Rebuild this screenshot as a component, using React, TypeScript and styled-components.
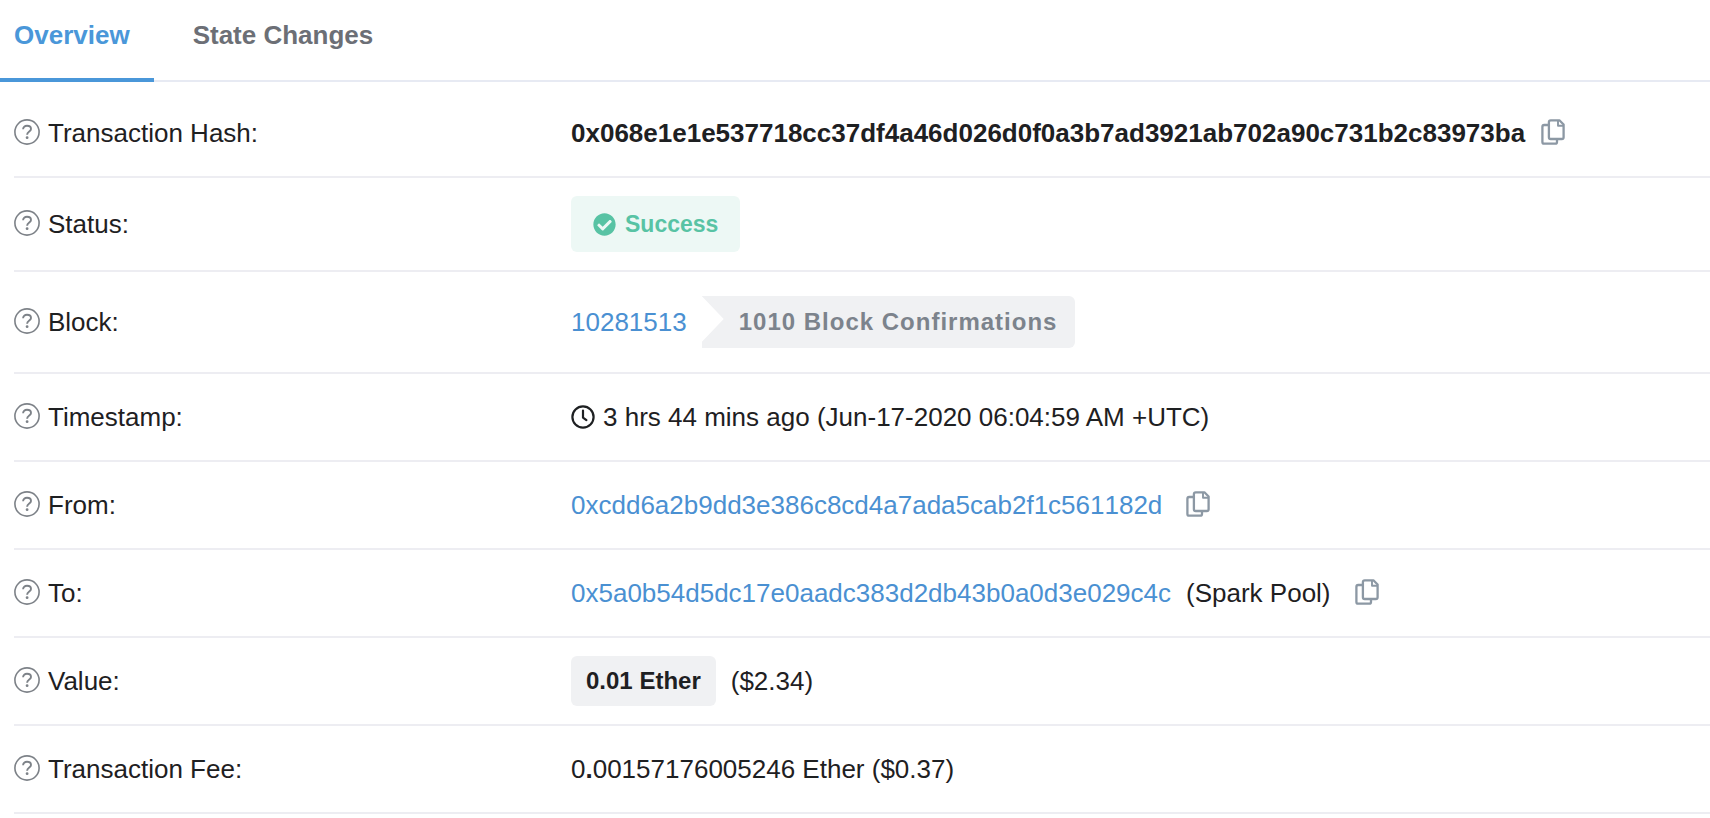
import React from "react";
import styled, { createGlobalStyle, css } from "styled-components";
import { FaCheckCircle } from "react-icons/fa";

const GlobalStyle = createGlobalStyle`
  * { box-sizing: border-box; }
  body {
    margin: 0;
    background: #fff;
    color: #1e2022;
    font-family: "Liberation Sans", Arial, sans-serif;
    font-size: 26px;
    line-height: 38px;
  }
`;

const Page = styled.main`
  min-width: 0;
`;

const Tabs = styled.nav`
  display: flex;
  gap: 25px;
  box-shadow: inset 0 -2px 0 #e7eaf3;
`;

const Tab = styled.button<{ $active?: boolean }>`
  padding: 16px 24px 24px 14px;
  border: 0;
  border-bottom: 4px solid ${(p) => (p.$active ? "#4a97d9" : "transparent")};
  background: none;
  color: ${(p) => (p.$active ? "#4a97d9" : "#6c6f76")};
  font: inherit;
  font-weight: 700;
  cursor: pointer;
`;

const Details = styled.dl`
  margin: 0;
  padding: 8px 0 0 14px;
`;

const Row = styled.div`
  display: grid;
  grid-template-columns: 557px 1fr;
  align-items: center;
  padding: 18px 0;
  border-bottom: 2px solid #ededf2;
`;

const Label = styled.dt`
  display: flex;
  align-items: center;
  gap: 8px;

  svg {
    margin-bottom: 2px;
  }
`;

const Value = styled.dd`
  display: flex;
  align-items: center;
  min-height: 50px;
  margin: 0;
  white-space: nowrap;
`;

const Hash = styled.strong`
  font-weight: 700;
`;

const Link = styled.a`
  color: #4a90d2;
  font-kerning: none;
  text-decoration: none;
`;

const Note = styled.span`
  margin-left: 15px;
`;

const CopyButton = styled.button<{ $near?: boolean }>`
  display: flex;
  margin: 0 0 0 ${(p) => (p.$near ? 16 : 24)}px;
  padding: 0 0 2px;
  border: 0;
  background: none;
  color: #8c98a4;
  cursor: pointer;
`;

const badge = css`
  display: inline-flex;
  align-items: center;
  border-radius: 6px;
  font-weight: 700;
`;

const StatusBadge = styled.span`
  ${badge}
  gap: 9px;
  height: 56px;
  padding: 0 22px;
  background: #edf8f5;
  color: #58c3a4;
  font-size: 23px;
`;

const AmountBadge = styled.span`
  ${badge}
  height: 50px;
  padding: 0 15px;
  background: #f0f1f3;
  font-size: 24px;
`;

const ConfirmationsBadge = styled.span`
  ${badge}
  height: 52px;
  margin: 6px 0 6px 15px;
  padding: 0 18px 0 37px;
  border-radius: 0 6px 6px 0;
  background: #f0f1f3;
  color: #7c838c;
  font-size: 24px;
  letter-spacing: 1px;
  clip-path: polygon(0 0, 100% 0, 100% 100%, 0 100%, 0 46px, 22px 23px);
`;

const Time = styled.time`
  display: flex;
  align-items: center;
  gap: 8px;
`;

const HelpIcon = () => (
  <svg width="26" height="26" viewBox="0 0 26 26" fill="none" stroke="#7d8288" aria-hidden="true">
    <circle cx="13" cy="13" r="12.1" strokeWidth="1.6" />
    <path d="M9.1 10.2C9.1 7.9 10.8 6.8 13 6.8C15.3 6.8 17 8 17 10C17 12.5 13.1 12.5 13.1 15.7" strokeWidth="1.9" />
    <circle cx="13.1" cy="18.7" r="1.4" fill="#7d8288" stroke="none" />
  </svg>
);

const ClockIcon = () => (
  <svg width="24" height="24" viewBox="0 0 24 24" fill="none" stroke="currentColor" strokeWidth="2.2" aria-hidden="true">
    <circle cx="12" cy="12" r="10.6" />
    <path d="M12 5.6V12.6L15.4 15.2" strokeLinecap="round" strokeLinejoin="round" />
  </svg>
);

const CopyIcon = () => (
  <svg width="24" height="26" viewBox="0 0 24 26" fill="none" stroke="currentColor" strokeWidth="2.3" strokeLinejoin="round" aria-hidden="true">
    <path d="M7.5 6H3.2Q1.4 6 1.4 7.8V22.9Q1.4 24.7 3.2 24.7H14.2Q16 24.7 16 22.9V20.5" />
    <path d="M9.7 1.3H18.4L22.6 5.5V18.2Q22.6 20 20.8 20H9.7Q7.9 20 7.9 18.2V3.1Q7.9 1.3 9.7 1.3Z" />
    <path d="M17 1.8V6.8H22.2" strokeWidth="1.9" />
  </svg>
);

const Copy = ({ near }: { near?: boolean }) => (
  <CopyButton type="button" aria-label="Copy" $near={near}>
    <CopyIcon />
  </CopyButton>
);

const Field = ({ label, children }: { label: string; children: React.ReactNode }) => (
  <Row>
    <Label>
      <HelpIcon />
      {label}
    </Label>
    <Value>{children}</Value>
  </Row>
);

export default function App() {
  return (
    <Page>
      <GlobalStyle />
      <Tabs>
        <Tab type="button" $active>Overview</Tab>
        <Tab type="button">State Changes</Tab>
      </Tabs>
      <Details>
        <Field label="Transaction Hash:">
          <Hash>0x068e1e1e537718cc37df4a46d026d0f0a3b7ad3921ab702a90c731b2c83973ba</Hash>
          <Copy near />
        </Field>
        <Field label="Status:">
          <StatusBadge>
            <FaCheckCircle size={23} aria-hidden="true" />
            Success
          </StatusBadge>
        </Field>
        <Field label="Block:">
          <Link href="#block">10281513</Link>
          <ConfirmationsBadge>1010 Block Confirmations</ConfirmationsBadge>
        </Field>
        <Field label="Timestamp:">
          <Time dateTime="2020-06-17T06:04:59Z">
            <ClockIcon />
            3 hrs 44 mins ago (Jun-17-2020 06:04:59 AM +UTC)
          </Time>
        </Field>
        <Field label="From:">
          <Link href="#from">0xcdd6a2b9dd3e386c8cd4a7ada5cab2f1c561182d</Link>
          <Copy />
        </Field>
        <Field label="To:">
          <Link href="#to">0x5a0b54d5dc17e0aadc383d2db43b0a0d3e029c4c</Link>
          <Note>(Spark Pool)</Note>
          <Copy />
        </Field>
        <Field label="Value:">
          <AmountBadge>0.01 Ether</AmountBadge>
          <Note>($2.34)</Note>
        </Field>
        <Field label="Transaction Fee:">
          <span>0<b>.</b>00157176005246 Ether ($0.37)</span>
        </Field>
      </Details>
    </Page>
  );
}
